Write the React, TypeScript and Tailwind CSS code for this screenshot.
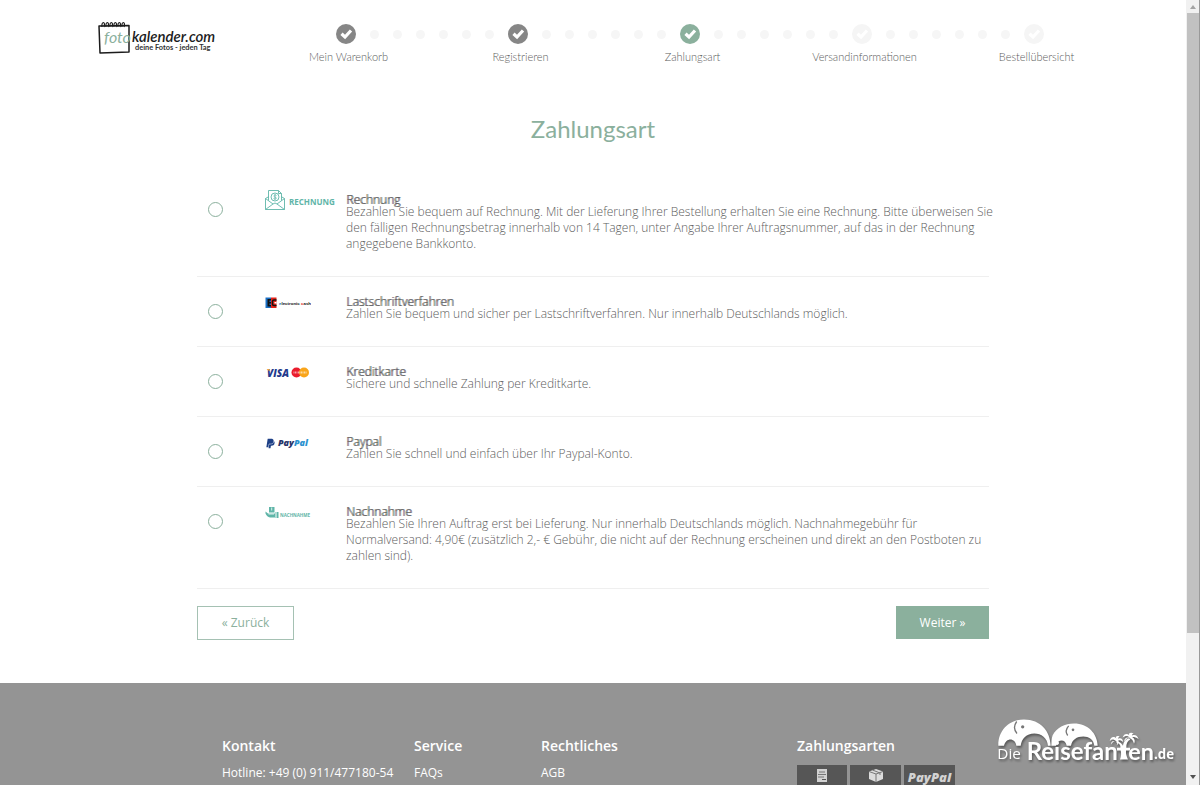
import type { ReactNode } from "react";
import { FaPaypal } from "react-icons/fa";

const steps = [
  { label: "Mein Warenkorb", color: "text-[#868686]" },
  { label: "Registrieren", color: "text-[#868686]" },
  { label: "Zahlungsart", color: "text-[#8bb09d]" },
  { label: "Versandinformationen", color: "text-[#f5f5f5]" },
  { label: "Bestellübersicht", color: "text-[#f5f5f5]" },
];

function Logo() {
  return (
    <svg viewBox="0 0 120 36" className="h-9 w-[120px] shrink-0" role="img" aria-label="fotokalender.com">
      {/* calendar sheet */}
      <path d="M1 6 L31 5.500 L31 32 L2 33 Z" fill="none" stroke="#1c1c1c" strokeWidth="1.500" strokeLinejoin="round" />
      <path
        d="M4 7c-1-6 4-6 2 0m2 0c-1-6 4-6 2 0m2 0c-1-6 4-6 2 0m2 0c-1-6 4-6 2 0m2 0c-1-6 4-6 2 0m2 0c-1-6 4-6 2 0"
        fill="none"
        stroke="#1c1c1c"
        strokeWidth="1.200"
      />
      <text x="6" y="23" fontSize="16" fontStyle="italic" fontWeight="400" fill="#8bb09d" fontFamily="Lato, sans-serif">
        foto
      </text>
      <text x="34" y="22" fontSize="15" fontStyle="italic" fontWeight="600" fill="#1c1c1c" fontFamily="Lato, sans-serif">
        kalender.com
      </text>
      <text x="37" y="30" fontSize="7.400" fontWeight="700" fill="#333" fontFamily="Lato, sans-serif">
        deine Fotos - jeden Tag
      </text>
    </svg>
  );
}

function Dots({ hidden }: { hidden: boolean }) {
  return (
    <span className={hidden ? "invisible flex gap-3.5" : "flex gap-3.5"}>
      <i className="size-[9px] rounded-full bg-[#f6f6f6]" />
      <i className="size-[9px] rounded-full bg-[#f6f6f6]" />
      <i className="size-[9px] rounded-full bg-[#f6f6f6]" />
    </span>
  );
}

function CheckCircle({ className }: { className: string }) {
  return (
    <svg viewBox="0 0 20 20" className={"size-5 " + className}>
      <circle cx="10" cy="10" r="10" fill="currentColor" />
      <path d="M5.500 9.800 L9 13 L15 6.500" fill="none" stroke="#fff" strokeWidth="3.200" />
    </svg>
  );
}

function RechnungLogo() {
  return (
    <svg viewBox="0 0 72 22" className="h-[22px] w-[72px]">
      <g fill="none" stroke="#5fb5a8" strokeWidth="0.900">
        <path d="M4 7.500 L0.500 9.500 V20.500 H19.500 V9.500 L16 7.500" />
        <path d="M3.500 11.500 V1.500 H13.500 L16.500 4.500 V11.500 M13.500 1.500 V4.500 H16.500" />
        <path d="M0.500 9.500 L8 15 M19.500 9.500 L12 15 M0.500 20.500 L8 15 Q10 13 12 15 L19.500 20.500" />
        <circle cx="10" cy="8" r="4" />
        <path d="M11.500 6.500 C10.500 5.500 8.500 6 9 7.500 C9.500 8.500 11.500 8 11.300 9.300 C10.800 10.500 9 10 8.500 9.500 M10 5 V11" strokeWidth="0.800" />
      </g>
      <text x="24" y="16" fontSize="8" fontWeight="700" fill="#5fb5a8" fontFamily="Open Sans, sans-serif">
        RECHNUNG
      </text>
    </svg>
  );
}

function ElectronicCashLogo() {
  return (
    <svg viewBox="0 0 46 12" className="h-3 w-[46px]">
      {/* interlocked E and C */}
      <path d="M0.500 0.500 H6 V11 H0.500 Z" fill="#1a6fc4" />
      <path d="M6 0.500 H11.500 V11 H6 Z" fill="#e2231a" />
      <path d="M2.500 2 H6 V3.500 H4.500 V5 H6 V6.500 H4.500 V8 H6 V9.500 H2.500 Z" fill="#111" />
      <path d="M11.500 3 H9 Q7.500 3 7.500 4.500 V7 Q7.500 8.500 9 8.500 H11.500" fill="none" stroke="#111" strokeWidth="1.500" />
      <path d="M11.500 5 H9.500 V6.500 H11.500 Z" fill="#fff" />
      <text x="14" y="8" fontSize="4.400" fontWeight="700" fill="#111" fontFamily="Liberation Sans Narrow, Liberation Sans, sans-serif">
        <tspan fill="#1a6fc4">e</tspan>lectronic <tspan fill="#e2231a">c</tspan>ash
      </text>
    </svg>
  );
}

function CardsLogo() {
  return (
    <svg viewBox="0 0 46 12" className="h-3 w-[46px]">
      <text x="2" y="9.500" fontSize="10" fontStyle="italic" fontWeight="800" fill="#233a8c" fontFamily="Open Sans, sans-serif">
        VISA
      </text>
      <path d="M1.500 2 L4.500 2 L5 4.500 Z" fill="#f2a33a" />
      <circle cx="31.500" cy="5.500" r="5" fill="#ea1c2d" />
      <circle cx="39" cy="5.500" r="5" fill="#f9a51a" />
      <path d="M28.500 5.500 H41.500" stroke="#fff" strokeWidth="1.800" strokeOpacity="0.600" strokeDasharray="1 0.500" />
    </svg>
  );
}

function PaypalLogo() {
  return (
    <span className="flex h-3 items-center gap-[2px] font-['Open_Sans',sans-serif] text-[9px] leading-3 font-extrabold text-[#27346a] italic">
      <FaPaypal className="size-[11px] text-[#1d3f86]" />
      <span>
        Pay<span className="text-[#2b92d0]">Pal</span>
      </span>
    </span>
  );
}

function NachnahmeLogo() {
  return (
    <svg viewBox="0 0 46 12" className="h-3 w-[46px]">
      <g fill="#5fb5a8">
        <path d="M4 0 H9.500 V5.500 H4 Z" />
        <path d="M0.500 4.500 L3 6.500 H10 V10.500 H5 Q2 10 0.500 6.500 Z" />
        <path d="M10.500 5 H11.500 V11 H10.500 Z M12 5 H13.500 V11 H12 Z" />
      </g>
      <path d="M6.700 0.500 V3.500 M3.500 7 H9" stroke="#fff" strokeWidth="0.800" />
      <text x="15" y="9.500" fontSize="4.500" fontWeight="700" fill="#5fb5a8" fontFamily="Open Sans, sans-serif">
        NACHNAHME
      </text>
    </svg>
  );
}

const methods: { id: string; title: string; text: string; logo: ReactNode }[] = [
  {
    id: "rechnung",
    title: "Rechnung",
    text: "Bezahlen Sie bequem auf Rechnung. Mit der Lieferung Ihrer Bestellung erhalten Sie eine Rechnung. Bitte überweisen Sie den fälligen Rechnungsbetrag innerhalb von 14 Tagen, unter Angabe Ihrer Auftragsnummer, auf das in der Rechnung angegebene Bankkonto.",
    logo: <RechnungLogo />,
  },
  {
    id: "lastschrift",
    title: "Lastschriftverfahren",
    text: "Zahlen Sie bequem und sicher per Lastschriftverfahren. Nur innerhalb Deutschlands möglich.",
    logo: <ElectronicCashLogo />,
  },
  {
    id: "kreditkarte",
    title: "Kreditkarte",
    text: "Sichere und schnelle Zahlung per Kreditkarte.",
    logo: <CardsLogo />,
  },
  {
    id: "paypal",
    title: "Paypal",
    text: "Zahlen Sie schnell und einfach über Ihr Paypal-Konto.",
    logo: <PaypalLogo />,
  },
  {
    id: "nachnahme",
    title: "Nachnahme",
    text: "Bezahlen Sie Ihren Auftrag erst bei Lieferung. Nur innerhalb Deutschlands möglich. Nachnahmegebühr für Normalversand: 4,90€ (zusätzlich 2,- € Gebühr, die nicht auf der Rechnung erscheinen und direkt an den Postboten zu zahlen sind).",
    logo: <NachnahmeLogo />,
  },
];

function Reisefanten() {
  return (
    <svg
      viewBox="50 50 540 140"
      className="absolute right-[10px] bottom-[21px] h-[47px] w-[180px] drop-shadow-[1px_2px_1px_rgba(0,0,0,0.4)]"
      role="img"
      aria-label="Die Reisefanten.de"
    >
      <g fill="#fff">
        {/* two elephants */}
        <path d="M57 136 C56 88 90 57 134 57 C184 57 213 92 214 136 H206 C204 112 186 99 165 99 C141 99 127 114 124 136 H111 C108 112 80 110 74 136 Z" />
        <path d="M220 104 C232 82 256 69 284 69 C326 69 354 99 355 136 H345 C343 116 328 108 312 108 C292 108 278 118 275 136 H262 C259 114 234 116 230 136 H216 C217 124 216 114 220 104 Z" />
        {/* palm trunk and crowns */}
        <path d="M413 142 H423 C425 134 420 128 410 126 L414 122 C422 124 428 130 431 136 C432 126 438 116 449 113 L453 117 C444 121 440 130 441 142 H452 V150 H440 C439 160 442 168 446 177 H422 C426 166 426 158 424 150 H413 Z" />
        <path d="M411 123 C402 114 396 117 391 122 C394 108 404 107 411 114 C407 108 413 105 421 108 C417 110 416 113 417 115 C424 111 431 116 432 126 C426 119 421 119 417 120 C420 126 416 132 412 134 C415 128 414 125 411 123 C404 120 399 124 396 132 C394 124 400 118 411 123 Z" />
        <path d="M452 112 C444 103 437 106 430 111 C434 99 443 98 450 104 C446 98 453 94 463 98 C459 100 457 103 458 105 C467 101 475 106 478 116 C469 110 463 109 459 110 C467 115 468 122 464 130 C462 120 457 115 452 113 C444 110 440 115 435 124 C434 114 441 108 452 112 Z" />
      </g>
      <path d="M112 63 C103 76 105 90 113 99 M268 76 C259 86 258 95 265 105" fill="none" stroke="#777" strokeWidth="4" />
      <circle cx="130" cy="79" r="5" fill="#777" />
      <circle cx="281" cy="88" r="4" fill="#777" />
      <g fill="#fff" fontFamily="Open Sans, sans-serif" fontWeight="400">
        <text x="54" y="176" fontSize="46">
          Die
        </text>
        <text x="142" y="177" fontSize="72" fontWeight="700" fontFamily="Lato, sans-serif">
          Reisefan
        </text>
        <text x="447" y="177" fontSize="70" fontWeight="700" fontFamily="Lato, sans-serif">
          en
        </text>
        <text x="524" y="176" fontSize="40" fontWeight="700">
          .de
        </text>
      </g>
    </svg>
  );
}

function FooterColumn({ title, children }: { title: string; children: ReactNode }) {
  return (
    <div>
      <h2 className="text-sm leading-5 font-semibold">{title}</h2>
      {children}
    </div>
  );
}

function PaymentTiles() {
  return (
    <div className="mt-[9px] flex gap-[3px]">
      <div className="flex h-8 w-[50px] justify-center bg-[#565656] pt-1">
        <svg viewBox="0 0 12 14" className="h-3.5 w-3">
          <path d="M1 0 H11 V13 H1 Z" fill="#d2d2d2" />
          <path d="M3 3 H9 M2 5.500 H10 M2 8 H8" stroke="#777" />
          <path d="M6 10.500 H10" stroke="#565656" />
        </svg>
      </div>
      <div className="flex h-8 w-[51px] justify-center bg-[#565656] pt-1">
        <svg viewBox="0 0 16 14" className="h-3.5 w-4">
          <path d="M8 0 L15 2.500 V10 L8 13 L1 10 V2.500 Z" fill="#dcdcdc" />
          <path d="M1 2.500 L8 5 L15 2.500 M8 5 V13 M4.500 1 L12 4 V6" fill="none" stroke="#777" />
        </svg>
      </div>
      <div className="flex h-8 w-[51px] justify-center bg-[#565656] pt-1 text-[13px] leading-4 font-extrabold text-[#d2d2d2] italic">
        PayPal
      </div>
    </div>
  );
}

function ScrollBar() {
  return (
    <div className="flex w-3.5 shrink-0 flex-col border-r border-[#999] bg-[#f1f1f1] pl-px" aria-hidden="true">
      <div className="flex h-[13px] items-center justify-center">
        <svg viewBox="0 0 6 4" className="h-1 w-1.5">
          <path d="M0 4 L3 0 L6 4 Z" fill="#a3a3a3" />
        </svg>
      </div>
      <div className="flex-1">
        <div className="h-[82%] bg-[#c1c1c1]" />
      </div>
      <div className="flex h-4 items-center justify-center">
        <svg viewBox="0 0 6 4" className="h-1 w-1.5">
          <path d="M0 0 L3 4 L6 0 Z" fill="#505050" />
        </svg>
      </div>
    </div>
  );
}

export default function App() {
  return (
    <div className="flex h-screen overflow-hidden bg-white font-['Open_Sans',sans-serif] text-xs leading-4 font-light text-[#5c5c5c]">
      <div className="relative flex min-w-0 flex-1 flex-col overflow-hidden">

        {/* HEADER */}
        <header className="mx-auto flex w-full max-w-[1054px] items-start justify-between pt-5 pl-8">
          <Logo />
          <ol className="flex w-full max-w-[860px] pt-1 font-['Lato',sans-serif]">
            {steps.map((step, i) => (
              <li key={step.label} className="flex flex-1 flex-col items-center gap-[3px]">
                <div className="flex items-center gap-3.5">
                  <Dots hidden={i === 0} />
                  <CheckCircle className={step.color} />
                  <Dots hidden={i === steps.length - 1} />
                </div>
                <span className="pl-[5px] text-[11px] leading-5 whitespace-nowrap">{step.label}</span>
              </li>
            ))}
          </ol>
        </header>

        {/* PAYMENT METHODS */}
        <main className="mx-auto w-full max-w-[792px]">
          <h1 className="mt-11 text-center font-['Lato',sans-serif] text-2xl leading-9 font-normal text-[#8bb09d]">
            Zahlungsart
          </h1>

          <form className="mt-7">
            {methods.map((m) => (
              <div
                key={m.id}
                className="grid grid-cols-[68px_81px_1fr] items-start border-b border-[#efefef] pt-[21px] pb-6"
              >
                <input
                  id={m.id}
                  type="radio"
                  name="zahlungsart"
                  className="mt-1.5 ml-[11px] size-[15px] appearance-none rounded-full border border-[#8bb09d] checked:bg-[#8bb09d]"
                />
                <div className={m.id === "rechnung" ? "-mt-[7px]" : "-mt-px"}>{m.logo}</div>
                <label htmlFor={m.id} className="-mr-2">
                  <strong className="block leading-2 font-light [text-shadow:1px_0_0]">{m.title}</strong>
                  <span className="block">{m.text}</span>
                </label>
              </div>
            ))}

            <div className="mt-[17px] flex items-start justify-between">
              <button type="button" className="h-[34px] w-[97px] border border-[#a5c1b3] font-normal text-[#8bb09d]">
                « Zurück
              </button>
              <button type="button" className="h-[33px] w-[93px] bg-[#8bb09d] font-normal text-white">
                Weiter »
              </button>
            </div>
          </form>
        </main>

        {/* FOOTER */}
        <footer className="mt-[43px] flex-1 bg-[#949494] pt-[53px] font-normal text-white">
          <div className="mx-auto grid w-full max-w-[742px] grid-cols-[192px_127px_256px_1fr]">
            <FooterColumn title="Kontakt">
              <p className="mt-[9px]">Hotline: +49 (0) 911/477180-54</p>
            </FooterColumn>
            <FooterColumn title="Service">
              <a href="#faqs" className="mt-[9px] block">FAQs</a>
            </FooterColumn>
            <FooterColumn title="Rechtliches">
              <a href="#agb" className="mt-[9px] block">AGB</a>
            </FooterColumn>
            <FooterColumn title="Zahlungsarten">
              <PaymentTiles />
            </FooterColumn>
          </div>
        </footer>

        <Reisefanten />
      </div>

      <ScrollBar />
    </div>
  );
}
